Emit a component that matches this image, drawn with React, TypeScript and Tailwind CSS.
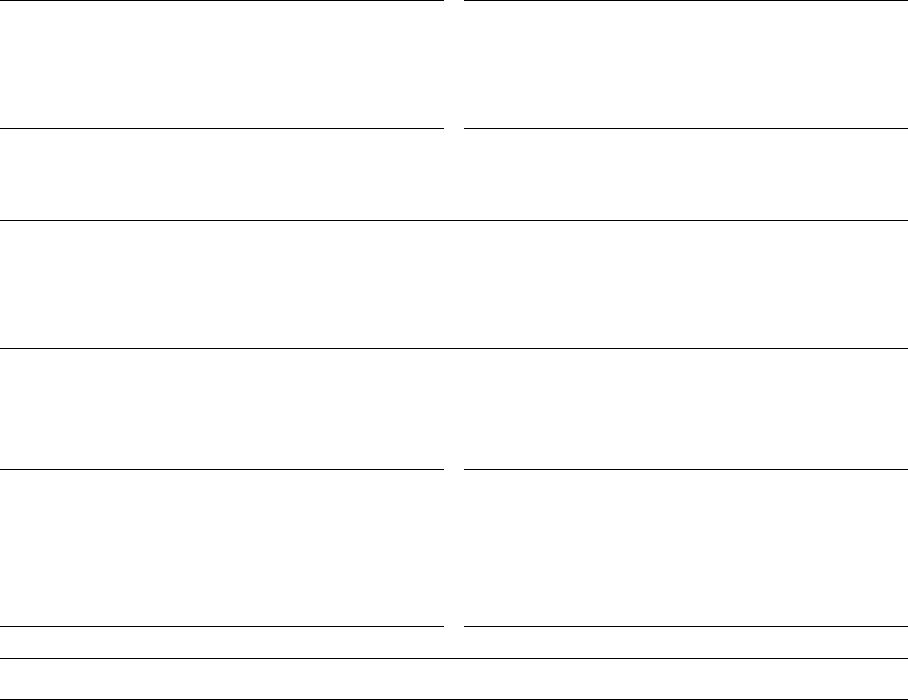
export default function App() {
  return (
    <div className="h-[700px] w-[908px] overflow-hidden bg-white">
      {/* top pair */}
      <div className="grid grid-cols-2 gap-5">
        <div className="h-[129px] border-y border-black" />
        <div className="h-[129px] border-y border-black" />
      </div>

      {/* wide block */}
      <div className="mt-[91px] h-[129px] border-y border-black" />

      {/* lower pair */}
      <div className="mt-[120px] grid grid-cols-2 gap-5">
        <div className="h-[158px] border-y border-black" />
        <div className="h-[158px] border-y border-black" />
      </div>

      {/* footer strip */}
      <div className="mt-[31px] h-[42px] border-y border-black" />
    </div>
  );
}
